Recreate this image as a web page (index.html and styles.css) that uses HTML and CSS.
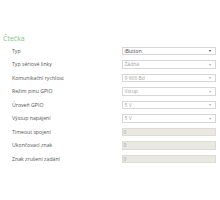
FILE: index.html
```html
<!DOCTYPE html>
<html>

<head>
    <meta charset="utf-8" />
    <title>Čtečka</title>
    <link rel="stylesheet" href="styles.css">
</head>

<body>
    <div class="main">
        <div class="section-title">Čtečka</div>
        <div class="form">
            <div class="label">Typ</div>
            <div class="select active"><span>iButton</span><span class="arrow">&#9662;</span></div>

            <div class="label">Typ sériové linky</div>
            <div class="select"><span>Žádná</span><span class="arrow">&#9662;</span></div>

            <div class="label">Komunikační rychlost</div>
            <div class="select"><span>9 600 Bd</span><span class="arrow">&#9662;</span></div>

            <div class="label">Režim pinu GPIO</div>
            <div class="select"><span>Vstup</span><span class="arrow">&#9662;</span></div>

            <div class="label">Úroveň GPIO</div>
            <div class="select"><span>5 V</span><span class="arrow">&#9662;</span></div>

            <div class="label">Výstup napájení</div>
            <div class="select"><span>5 V</span><span class="arrow">&#9662;</span></div>

            <div class="label">Timeout spojení</div>
            <div class="field">0</div>

            <div class="label">Ukončovací znak</div>
            <div class="field">0</div>

            <div class="label">Znak zrušení zadání</div>
            <div class="field">0</div>
        </div>
    </div>
</body>

</html>
```

FILE: styles.css
```css
* {
    font-family: 'Open Sans', 'Liberation Sans', sans-serif;
    padding: 0;
    margin: 0;
    box-sizing: border-box;
}

body {
    background-color: white;
}

.main {
    width: 220px;
    padding-top: 34px;
}

.section-title {
    font-size: 7px;
    line-height: 9px;
    color: #7fbf7f;
    padding-left: 3px;
}

.form {
    display: grid;
    grid-template-columns: 110px 94px;
    grid-auto-rows: 8.5px;
    row-gap: 5px;
    padding-left: 12px;
    margin-top: 3.7px;
}

.label {
    font-size: 5.2px;
    color: #555;
    display: flex;
    align-items: center;
}

.select {
    border: solid #d6d6d6 0.6px;
    background-color: white;
    font-size: 5px;
    color: #a0a0a0;
    display: flex;
    align-items: center;
    justify-content: space-between;
    padding: 0 4px 0 1.5px;
}

.select.active {
    color: #444;
}

.arrow {
    font-size: 4px;
    color: #b0b0b0;
}

.select.active .arrow {
    color: #333;
}

.field {
    border: solid #dcdcd4 0.6px;
    background-color: #e9e9e2;
    font-size: 5px;
    color: #999;
    display: flex;
    align-items: center;
    padding-left: 0.5px;
}
```
